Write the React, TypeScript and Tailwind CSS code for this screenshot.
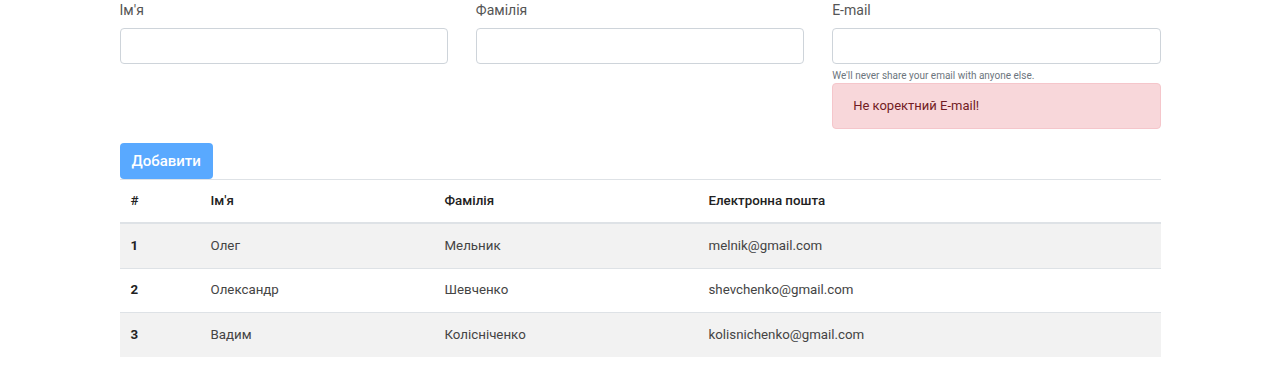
const people = [
  { id: 1, first: 'Олег', last: 'Мельник', email: 'melnik@gmail.com' },
  { id: 2, first: 'Олександр', last: 'Шевченко', email: 'shevchenko@gmail.com' },
  { id: 3, first: 'Вадим', last: 'Колісніченко', email: 'kolisnichenko@gmail.com' },
];

function Field({ label, children }: { label: string; children?: React.ReactNode }) {
  return (
    <div className="flex flex-col">
      <label className="mb-2 text-sm leading-5 text-[#555]">{label}</label>
      <input
        type="text"
        className="h-9 w-full rounded border border-[#ced4da] bg-white px-3 text-sm outline-none"
      />
      {children}
    </div>
  );
}

export default function App() {
  return (
    <div className="min-h-[371px] bg-white font-['Roboto',sans-serif] text-[#333]">
      <div className="mx-auto w-[1041px]">
        <div className="grid grid-cols-3 gap-x-7">
          <Field label="Ім'я" />
          <Field label="Фамілія" />
          <Field label="E-mail">
            <small className="mt-1.5 text-[10px] leading-3 text-[#6c757d]">
              We'll never share your email with anyone else.
            </small>
            <div className="mt-px h-[46px] rounded border border-[#f5c6cb] bg-[#f8d7da] px-5 pt-3 text-[13px] leading-5 text-[#721c24]">
              Не коректний E-mail!
            </div>
          </Field>
        </div>

        <button
          type="button"
          className="mt-[14px] h-9 rounded bg-[#59a9ff] px-3 text-[15px] font-medium text-white"
        >
          Добавити
        </button>

        <table className="w-full border-collapse text-left text-[13.3px]">
          <thead>
            <tr className="border-t border-b-2 border-t-[#dee2e6] border-b-[#dee2e6]">
              <th className="w-20 px-[11px] py-[11px] font-medium leading-5 text-[#222]">#</th>
              <th className="w-[234px] px-[11px] py-[11px] font-medium leading-5 text-[#222]">Ім'я</th>
              <th className="w-[264px] px-[11px] py-[11px] font-medium leading-5 text-[#222]">Фамілія</th>
              <th className="px-[11px] py-[11px] font-medium leading-5 text-[#222]">Електронна пошта</th>
            </tr>
          </thead>
          <tbody>
            {people.map((p, i) => (
              <tr
                key={p.id}
                className={`border-t border-[#dee2e6] ${i % 2 === 0 ? 'bg-[#f2f2f2]' : 'bg-white'}`}
              >
                <td className="px-[11px] py-[11.8px] font-bold leading-5 text-[#222]">{p.id}</td>
                <td className="px-[11px] py-[11.8px] leading-5 text-[#444]">{p.first}</td>
                <td className="px-[11px] py-[11.8px] leading-5 text-[#444]">{p.last}</td>
                <td className="px-[11px] py-[11.8px] leading-5 text-[#444]">{p.email}</td>
              </tr>
            ))}
          </tbody>
        </table>
      </div>
    </div>
  );
}
